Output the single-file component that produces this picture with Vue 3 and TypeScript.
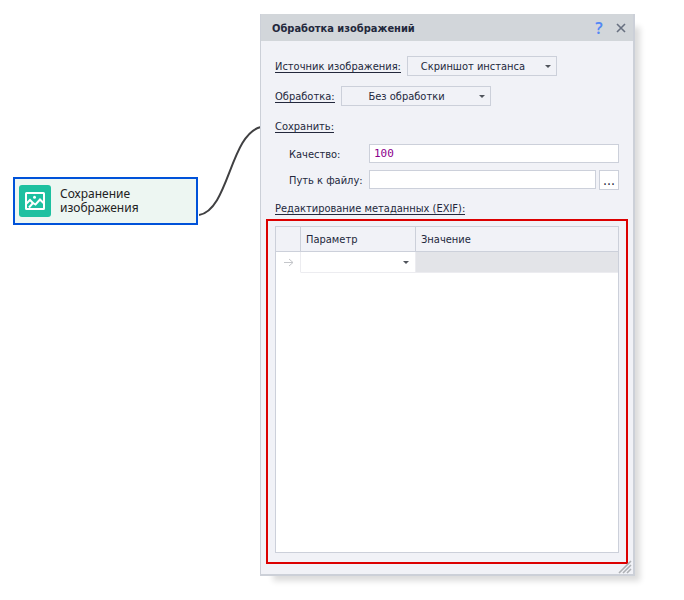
<script setup lang="ts">
import { ref } from 'vue'

const source = ref('Скриншот инстанса')
const processing = ref('Без обработки')
const quality = ref('100')
const filePath = ref('')
const parameter = ref('')
</script>

<template>
  <main class="canvas">
    <div class="node">
      <svg class="node-icon" viewBox="0 0 32 32" aria-hidden="true">
        <rect width="32" height="32" rx="3" fill="#1dc0a0" />
        <rect x="7" y="8" width="18" height="16" rx="0.5" fill="none" stroke="#fff" stroke-width="2" />
        <path d="M7.500 18.500l3.500-3.500 3 3" fill="none" stroke="#fff" stroke-width="2" />
        <path d="M10 22.500l4-4.500 2.500 1.500 4.500-5 4 4" fill="none" stroke="#fff" stroke-width="2" />
        <circle cx="15.500" cy="12.200" r="1.500" fill="#fff" />
      </svg>
      <span>Сохранение изображения</span>
    </div>

    <svg class="wire" viewBox="0 0 62 92" aria-hidden="true">
      <path d="M0 90C30 85 31 9 62 2" fill="none" stroke="#404042" stroke-width="2" />
    </svg>

    <section class="dialog" aria-labelledby="dialog-title">
      <header class="titlebar">
        <h1 id="dialog-title">Обработка изображений</h1>
        <button class="title-button help" type="button" aria-label="Справка">?</button>
        <button class="title-button" type="button" aria-label="Закрыть">
          <svg class="close" viewBox="0 0 10 10" aria-hidden="true">
            <path d="M1 1l8 8M9 1l-8 8" stroke="#687080" stroke-width="1.600" />
          </svg>
        </button>
      </header>

      <form class="form" @submit.prevent>
        <div class="row">
          <label class="caption" for="source">Источник изображения:</label>
          <span class="picker">
            <select id="source" v-model="source"><option>Скриншот инстанса</option></select>
          </span>
        </div>
        <div class="row">
          <label class="caption" for="processing">Обработка:</label>
          <span class="picker">
            <select id="processing" v-model="processing"><option>Без обработки</option></select>
          </span>
        </div>
        <div class="row"><span class="caption">Сохранить:</span></div>
        <div class="fields">
          <label for="quality">Качество:</label>
          <input id="quality" v-model="quality" class="wide" type="text" />
          <label for="path">Путь к файлу:</label>
          <input id="path" v-model="filePath" type="text" />
          <button class="browse" type="button" aria-label="Выбрать файл">...</button>
        </div>
        <span class="caption exif">Редактирование метаданных (EXIF):</span>
      </form>

      <div class="highlight">
        <div class="grid">
          <table>
            <thead>
              <tr>
                <th class="marker"></th>
                <th class="param">Параметр</th>
                <th>Значение</th>
              </tr>
            </thead>
            <tbody>
              <tr>
                <td class="marker">
                  <svg class="arrow" viewBox="0 0 11 9" aria-hidden="true">
                    <path d="M1 4.500h9M6 1l4 3.500-4 3.500" fill="none" stroke="#c4c6ca" />
                  </svg>
                </td>
                <td class="param">
                  <span class="picker cell">
                    <select v-model="parameter" aria-label="Параметр"><option value=""></option></select>
                  </span>
                </td>
                <td class="value"></td>
              </tr>
            </tbody>
          </table>
        </div>
      </div>

      <svg class="grip" viewBox="0 0 14 14" aria-hidden="true">
        <path d="M1 13L13 1M5 13l8-8M9 13l4-4" stroke="#adb0b4" stroke-width="1.600" />
      </svg>
    </section>
  </main>
</template>

<style>
body {
  margin: 0;
  background: #fff;
}
</style>

<style scoped>
.canvas {
  position: relative;
  min-height: 100vh;
  font-family: "DejaVu Sans Condensed", "Noto Sans", sans-serif;
  font-size: 11px;
  line-height: 14px;
  color: #23283c;
}

.canvas * {
  box-sizing: border-box;
}

button,
input,
select {
  margin: 0;
  font: inherit;
  color: inherit;
  border-radius: 0;
}

.node {
  position: absolute;
  left: 13px;
  top: 177px;
  display: flex;
  align-items: center;
  gap: 9px;
  width: 185px;
  height: 48px;
  padding: 0 40px 0 4px;
  border: 2px solid #0052d9;
  background: #edf6f2;
  font-family: "Noto Sans", sans-serif;
  font-size: 12px;
  color: #222;
}

.node-icon {
  flex: none;
  width: 32px;
  height: 32px;
}

.wire {
  position: absolute;
  left: 199px;
  top: 125px;
  width: 62px;
  height: 92px;
}

.dialog {
  position: absolute;
  left: 260px;
  right: 49px;
  top: 14px;
  bottom: 24px;
  display: flex;
  flex-direction: column;
  border: 1px solid #ccd0d8;
  border-width: 0 2px 2px 1px;
  background: #f1f2f7;
  box-shadow: 9px 9px 6px -4px rgba(0, 0, 0, 0.14);
}

.titlebar {
  display: flex;
  align-items: center;
  flex: none;
  height: 27px;
  padding: 0 4px 0 11px;
  background: #d2d6da;
}

h1 {
  flex: 1;
  margin: 0;
  padding-top: 2px;
  font-size: 11px;
  font-weight: 700;
}

.title-button {
  display: flex;
  align-items: center;
  justify-content: center;
  width: 16px;
  height: 20px;
  padding: 0;
  border: 0;
  background: none;
}

.help {
  margin-right: 6px;
  font-family: "Noto Sans", sans-serif;
  font-size: 16px;
  font-weight: 600;
  color: #5588f5;
}

.close {
  width: 10px;
  height: 10px;
}

.form {
  display: flex;
  flex-direction: column;
  gap: 10px;
  padding: 15px 14px 4px;
}

.row {
  display: flex;
  align-items: center;
  gap: 6px;
  height: 20px;
}

.caption {
  padding-top: 2px;
  border-bottom: 1px solid #23283c;
  line-height: 11px;
}

.exif {
  align-self: flex-start;
}

.picker {
  position: relative;
  display: block;
  width: 150px;
  height: 20px;
}

.picker::after {
  content: "";
  position: absolute;
  right: 6px;
  top: 9px;
  border: 3px solid transparent;
  border-top-color: #50545c;
  border-bottom: 0;
  pointer-events: none;
}

select {
  appearance: none;
  width: 100%;
  height: 100%;
  padding: 2px 18px 0 0;
  border: 1px solid #ccd0da;
  background: transparent;
  text-align: center;
  text-align-last: center;
}

.cell {
  width: 100%;
}

.cell select {
  border: 0;
}

.fields {
  display: grid;
  grid-template-columns: 77px 1fr 20px;
  align-items: start;
  gap: 7px 3px;
  margin-top: -2px;
  padding: 0 0 1px 14px;
}

.fields label {
  height: 19px;
  line-height: 22px;
}

input {
  width: 100%;
  height: 19px;
  padding: 0 4px;
  border: 1px solid #ccd0da;
  background: #fff;
  font-family: "DejaVu Sans Mono", monospace;
  color: #8b008b;
}

.wide {
  grid-column: 2 / 4;
}

.browse {
  height: 20px;
  padding: 0;
  border: 1px solid #ccd0da;
  background: #fff;
  font-size: 14px;
}

.highlight {
  display: flex;
  flex: 1;
  margin: 0 5px 10px;
  padding: 5px 7px 9px;
  border: 2px solid #dc0000;
}

.grid {
  flex: 1;
  border: 1px solid #ccd0da;
  background: #fff;
}

table {
  width: 100%;
  table-layout: fixed;
  border-collapse: separate;
  border-spacing: 0;
}

th {
  height: 25px;
  padding: 2px 5px 0;
  border-right: 1px solid #ccd0da;
  border-bottom: 1px solid #ccd0da;
  background: #f1f2f7;
  font-weight: 400;
  text-align: left;
}

td {
  height: 21px;
  padding: 0;
  border-right: 1px solid #ececf0;
  border-bottom: 1px solid #ececf0;
}

th:last-child,
td:last-child {
  border-right: 0;
}

.marker {
  width: 25px;
}

td.marker {
  border-bottom-color: #fff;
  text-align: center;
}

.param {
  width: 115px;
}

.value {
  background: #e3e4e8;
}

.arrow {
  display: block;
  width: 11px;
  height: 9px;
  margin: 0 auto;
}

.grip {
  position: absolute;
  right: 1px;
  bottom: 0;
  width: 14px;
  height: 14px;
}
</style>
